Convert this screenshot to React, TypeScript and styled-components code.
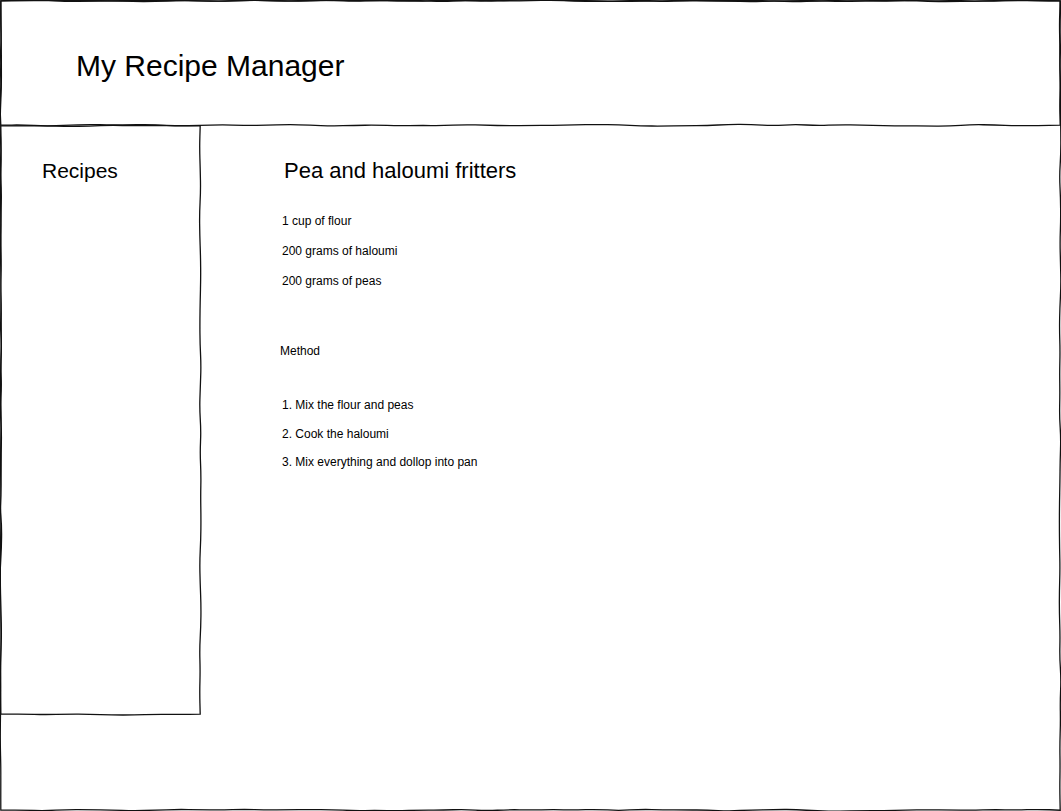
import * as React from 'react'
import styled, { createGlobalStyle } from 'styled-components'

interface Recipe {
  title: string,
  ingredients: string[],
  method: string[],
}

const recipe: Recipe = {
  title: 'Pea and haloumi fritters',
  ingredients: ['1 cup of flour', '200 grams of haloumi', '200 grams of peas'],
  method: ['Mix the flour and peas', 'Cook the haloumi', 'Mix everything and dollop into pan'],
}

const GlobalStyle = createGlobalStyle`
  html, body {
    margin: 0;
    padding: 0;
    background: #fff;
  }
  body {
    font-family: "Liberation Sans", Arial, sans-serif;
    color: #000;
  }
`

const Page = styled.div`
  position: relative;
  width: 1061px;
  height: 811px;
  display: flex;
  flex-direction: column;
  overflow: hidden;
`

const Header = styled.header`
  position: relative;
  height: 126px;
  flex-shrink: 0;
  box-sizing: border-box;
  padding: 51px 0 0 76px;
`

const AppTitle = styled.h1`
  margin: 0;
  font-size: 30px;
  line-height: 30px;
  font-weight: 400;
`

const Body = styled.div`
  display: flex;
  align-items: flex-start;
  flex: 1;
`

const Sidebar = styled.nav`
  position: relative;
  width: 201px;
  height: 590px;
  margin-top: -1px;
  flex-shrink: 0;
  box-sizing: border-box;
  padding: 35px 0 0 42px;
`

const SidebarTitle = styled.h2`
  margin: 0;
  font-size: 21px;
  line-height: 21px;
  font-weight: 400;
`

const Main = styled.main`
  flex: 1;
  padding: 34px 0 0 80px;
`

const RecipeTitle = styled.h2`
  margin: 0 0 0 3px;
  font-size: 22px;
  line-height: 22px;
  font-weight: 400;
`

const Ingredients = styled.ul`
  list-style: none;
  margin: 24px 0 0 0;
  padding: 0 0 0 1px;
`

const Ingredient = styled.li`
  font-size: 12px;
  line-height: 30px;
`

const MethodLabel = styled.div`
  margin: 40px 0 0 -1px;
  font-size: 12px;
  line-height: 30px;
`

const Steps = styled.ol`
  list-style: none;
  margin: 25px 0 0 0;
  padding: 0 0 0 1px;
`

const Step = styled.li`
  font-size: 12px;
  line-height: 28.5px;
`

const Outline = styled.svg`
  position: absolute;
  left: 0;
  top: 0;
  pointer-events: none;
  overflow: visible;
`

type Point = [number, number]

// seeded random so the hand drawn lines stay the same on every render
const makeRandom = (seed: number) => () => {
  seed |= 0
  seed = (seed + 0x6d2b79f5) | 0
  let t = Math.imul(seed ^ (seed >>> 15), 1 | seed)
  t = (t + Math.imul(t ^ (t >>> 7), 61 | t)) ^ t
  return ((t ^ (t >>> 14)) >>> 0) / 4294967296
}

const f = (n: number) => n.toFixed(2)

// one wobbly edge from corner to corner, smoothed with quadratic curves
const roughEdge = (from: Point, to: Point, rnd: () => number) => {
  const len = Math.hypot(to[0] - from[0], to[1] - from[1])
  const n = Math.max(2, Math.round(len / 22))
  const nx = -(to[1] - from[1]) / len
  const ny = (to[0] - from[0]) / len
  const pts: Point[] = []
  for (let k = 0; k <= n; k++) {
    const t = k / n
    const off = k === 0 || k === n ? 0 : (rnd() - 0.5) * 1.8
    pts.push([from[0] + (to[0] - from[0]) * t + nx * off, from[1] + (to[1] - from[1]) * t + ny * off])
  }
  let d = ` L${f((pts[0][0] + pts[1][0]) / 2)} ${f((pts[0][1] + pts[1][1]) / 2)}`
  for (let k = 1; k < pts.length - 1; k++) {
    const m: Point = [(pts[k][0] + pts[k + 1][0]) / 2, (pts[k][1] + pts[k + 1][1]) / 2]
    d += ` Q${f(pts[k][0])} ${f(pts[k][1])} ${f(m[0])} ${f(m[1])}`
  }
  return d + ` L${f(to[0])} ${f(to[1])}`
}

const roughRect = (w: number, h: number, seed: number) => {
  const rnd = makeRandom(seed)
  const i = 0.8
  const corners: Point[] = [[i, i], [w - i, i], [w - i, h - i], [i, h - i]]
  let d = `M${f(corners[0][0])} ${f(corners[0][1])}`
  corners.forEach((from, c) => {
    d += roughEdge(from, corners[(c + 1) % 4], rnd)
  })
  return d + ' Z'
}

const SketchBorder = ({ width, height, seed }: { width: number, height: number, seed: number }) => (
  <Outline width={width} height={height} viewBox={`0 0 ${width} ${height}`}>
    <path d={roughRect(width, height, seed)} fill="none" stroke="#111" strokeWidth={1.3} strokeLinejoin="miter" />
  </Outline>
)

const App = () => (
  <>
    <GlobalStyle />
    <Page>
      <SketchBorder width={1061} height={811} seed={7} />
      <Header>
        <SketchBorder width={1061} height={126} seed={21} />
        <AppTitle>My Recipe Manager</AppTitle>
      </Header>
      <Body>
        <Sidebar>
          <SketchBorder width={201} height={590} seed={42} />
          <SidebarTitle>Recipes</SidebarTitle>
        </Sidebar>
        <Main>
          <RecipeTitle>{recipe.title}</RecipeTitle>
          <Ingredients>
            {recipe.ingredients.map(item => <Ingredient key={item}>{item}</Ingredient>)}
          </Ingredients>
          <MethodLabel>Method</MethodLabel>
          <Steps>
            {recipe.method.map((step, i) => <Step key={step}>{`${i + 1}. ${step}`}</Step>)}
          </Steps>
        </Main>
      </Body>
    </Page>
  </>
)

export default App
